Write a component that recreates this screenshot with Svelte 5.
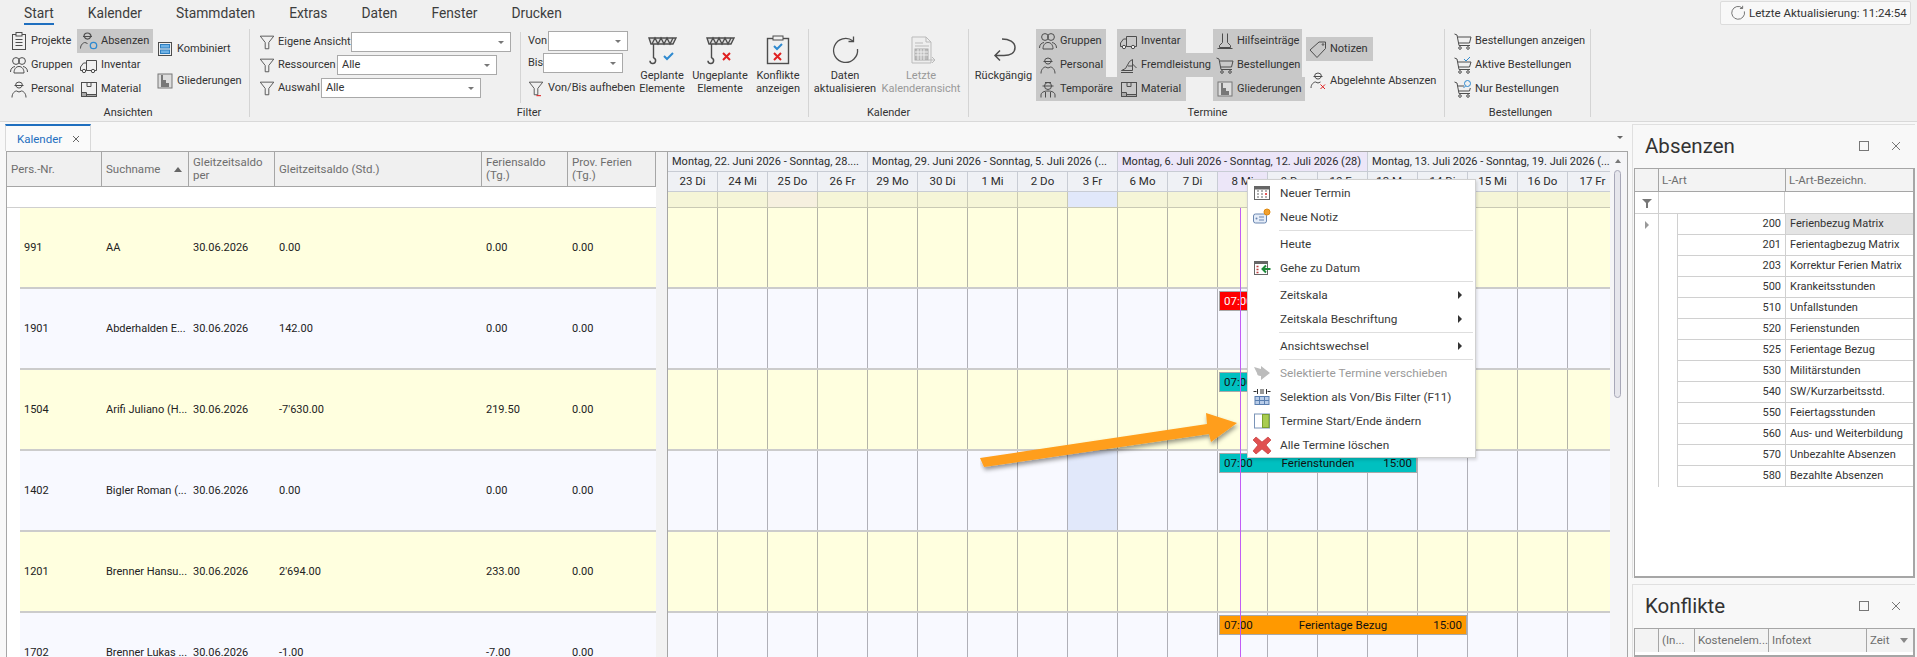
<script lang="ts">
  const ICONS: Record<string, string> = {
    clipboard: `<rect x="3.500" y="3.500" width="13" height="15"/><rect x="7" y="1.500" width="6" height="3.500" fill="#f0f0f0"/><path d="M6.500 8.500h7M6.500 11.500h7M6.500 14.500h7"/>`,
    group: `<circle cx="7" cy="6" r="3.400"/><circle cx="13" cy="6" r="3.400"/><path d="M1.500 17c0-3.500 2-5 4.500-5.500M18.500 17c0-3.500-2-5-4.500-5.500M5 18c0-4 2-6.500 5-6.500s5 2.500 5 6.500z"/>`,
    person: `<path d="M6.500 6.500a3.500 3.500 0 0 1 7 0M5.500 6.500h9M6.800 6.800a3.400 3.400 0 0 0 6.400 0"/><path d="M3 18.500c0-4.500 3-6.500 4.500-6.500l2.500 1 2.500-1c1.500 0 4.500 2 4.500 6.500"/>`,
    absenz: `<path d="M5 5.500a3.500 3.500 0 0 1 7 0M4 5.500h9M5.300 5.800a3.400 3.400 0 0 0 6.400 0" stroke-width="1.200"/><path d="M1.500 17.500c0-4 3-6 4.500-6l2.500 1"/><circle cx="14.500" cy="14.500" r="3.200" stroke="#2f8ad0" stroke-width="1.300"/>`,
    truck: `<path d="M7.500 5.500h10v10h-10zM7.500 8h-3l-3 4v3.500h6"/><circle cx="5" cy="16" r="1.700" fill="#f0f0f0"/><circle cx="14" cy="16" r="1.700" fill="#f0f0f0"/>`,
    material: `<rect x="2.500" y="3.500" width="15" height="14"/><path d="M8 3.500v4h4v-4" /><path d="M2.500 13.500h5v4h-5z" fill="#aaa"/><path d="M7.500 15.500h10v2h-10z" fill="#aaa"/>`,
    kombi: `<rect x="3.500" y="3.500" width="13" height="13"/><rect x="5.500" y="5.500" width="9" height="3.500" fill="#6fb2e6" stroke="#2f7fc0"/><rect x="5.500" y="11" width="9" height="3.500" fill="#6fb2e6" stroke="#2f7fc0"/>`,
    glied: `<rect x="3" y="3" width="14" height="14" fill="#ddd" stroke="#777"/><path d="M6 4h2v5h3v3h3v4h-8z" fill="#777" stroke="none"/>`,
    funnel: `<path d="M2.500 3.500h15l-5.500 7v7h-4v-7z"/>`,
    funnelx: `<path d="M2.500 3.500h15l-5.500 7v7h-4v-7z"/><path d="M10.500 18.500h5" stroke="#e02020" stroke-width="1.200"/>`,
    hilfs: `<path d="M7.500 2.500v9M12.500 2.500v9M7.500 11.500l-3 3v2h11v-2l-3-3M2.500 17.500h15"/>`,
    digger: `<path d="M2.500 15.500l4-2 4-7 3-2v11h-11zM9 11h4M2 17.500h12"/><path d="M13.500 9l4 4"/>`,
    hat: `<circle cx="10" cy="7" r="3.500"/><path d="M4.500 7h11M7 3.500h6"/><path d="M3 18.500v-2.500c0-2.500 3-4 7-4s7 1.500 7 4v2.500M7.500 13v5.500M12.500 13v5.500"/>`,
    cart: `<path d="M1.500 3l2.500 1 2 10.500h11M5 6h13l-1.500 6h-11"/><circle cx="7" cy="17" r="1.300"/><circle cx="15" cy="17" r="1.300"/>`,
    cartcheck: `<path d="M1.500 3l2.500 1 2 10.500h11M5 7h13l-1.500 5h-11"/><circle cx="7" cy="17" r="1.300"/><circle cx="15" cy="17" r="1.300"/><path d="M11 4l2 2 4-4" stroke="#2f8ad0"/>`,
    cartsearch: `<path d="M1.500 3l2.500 1 2 10.500h11M5 7h6M5.500 12h11l.8-3"/><circle cx="7" cy="17" r="1.300"/><circle cx="15" cy="17" r="1.300"/><circle cx="14.500" cy="4.500" r="3" stroke="#2f8ad0"/><path d="M12.500 7l-2 2" stroke="#2f8ad0"/>`,
    tag: `<path d="M2 11l9-8h6.500v6.500l-8.500 9z"/><circle cx="15" cy="5.500" r=".8"/>`,
    personx: `<path d="M6.500 5.500a3.500 3.500 0 0 1 7 0M5.500 5.500h9M6.800 5.800a3.400 3.400 0 0 0 6.400 0"/><path d="M3 17c0-4 3-6 4.500-6l2.500 1 2.500-1"/><path d="M12.500 13.500l4.500 4.500M17 13.500l-4.500 4.500" stroke="#e02020"/>`,
    refresh: `<path d="M15.500 3.800a8 8 0 1 0 2.500 4.200"/><path d="M15.800 1v3.400h-3.400"/>`,
    calendar: `<rect x="2.500" y="3.500" width="15" height="13" stroke="#666" fill="#fff"/><rect x="2.500" y="3.500" width="15" height="2.500" fill="#666" stroke="#666"/><path d="M5 8h2M9 8h2M13 8h2M5 11h2M9 11h2M5 14h2M9 14h2M13 14h2" stroke="#999" stroke-width="1.500"/><path d="M13 11h2" stroke="#e02020" stroke-width="1.500"/>`,
    notiz: `<rect x="1.500" y="7" width="13" height="9" rx="2" fill="#e4ecf8" stroke="#6a86b0"/><circle cx="4.500" cy="11.500" r="1" fill="#6a86b0" stroke="none"/><path d="M7 10h5M7 13h5" stroke="#6a86b0"/><circle cx="15" cy="5" r="3" fill="#f0a030" stroke="#e08a10"/>`,
    goto: `<rect x="2.500" y="3.500" width="13" height="13" stroke="#666" fill="#fff"/><rect x="2.500" y="3.500" width="13" height="2" fill="#666" stroke="#666"/><path d="M4.500 8.500h2M4.500 11.500h2M4.500 14.500h2" stroke="#c04040" stroke-width="1.500"/><path d="M18.500 11h-7M14 7.500l-3.500 3.500 3.500 3.500" stroke="#1f8a3a" stroke-width="2" />`,
    move: `<path d="M2 4l7 2 0-3 9 7-9 7 0-4c-3 0-4-1-4-3z" fill="#bcbcbc" stroke="none"/>`,
    vonbis: `<path d="M5.500 2v5M14.500 2v5M1.500 4.500h3M18.500 4.500h-3M9 2v5M11 2v5" stroke="#333"/><rect x="3" y="9.500" width="14" height="8" fill="#b8cce8" stroke="#5a7fb0"/><path d="M3 13.500h14M7.500 9.500v8M12.500 9.500v8" stroke="#5a7fb0"/>`,
    startend: `<rect x="2.500" y="3" width="15" height="14" fill="#fff" stroke="#7a94b8"/><rect x="10.500" y="3.500" width="6.500" height="13" fill="#a8cc50" stroke="#7aa030"/>`,
    redx: `<path d="M4 2l6 5 6-5 3 3-5 5 5 6-3 3-6-5-6 5-3-3 5-6-5-5z" fill="#e05050" stroke="#c03030" stroke-width=".6"/>`,
  };

  const CRANE = `<path d="M2 3h27l-3 6H4z" fill="#dcdcdc" stroke-width="1.400"/><path d="M5 9l3-6 3 6 3-6 3 6 3-6 3 6 3-6" stroke-width="1.300"/><path d="M6.500 9v14" stroke-width="1.400"/><path d="M6.500 23a2.800 2.800 0 1 1-3.500 2.700" stroke-width="1.500"/>`;

  const BIG: Record<string, string> = {
    craneok: `${CRANE}<path d="M17 21l3 3 6-6" stroke="#2f8ad0" stroke-width="2"/>`,
    craneno: `${CRANE}<path d="M18 18l7 7M25 18l-7 7" stroke="#e02020" stroke-width="2"/>`,
    konflikt: `<rect x="4.500" y="3.500" width="21" height="25" stroke-width="1.400"/><rect x="10" y="1" width="10" height="4" fill="#f0f0f0"/><path d="M11 11l3 3 5-5" stroke="#2f8ad0" stroke-width="2"/><path d="M11 18l7 7M18 18l-7 7" stroke="#e02020" stroke-width="2"/>`,
    refresh: `<path d="M23 6a12 12 0 1 0 4.500 8" stroke-width="1.300"/><path d="M23.500 1.500v5h-5" stroke-width="1.300"/>`,
    letzte: `<path d="M6 2h14l5 5v21H6z" fill="#eee" stroke="#bbb"/><path d="M20 2v5h5" stroke="#bbb"/><path d="M9 8h8M9 11h14" stroke="#bbb"/><rect x="9" y="14" width="13" height="11" fill="#bbb" stroke="#aaa"/><path d="M12 14v11M15 14v11M18 14v11M9 17h13M9 20h13" stroke="#eee"/><path d="M22 25h7M26 22l3 3-3 3" stroke="#bbb"/>`,
    undo: `<path d="M13 4c7 0 13 3 13 8.500s-5 8-11 8H6M11 15.500l-5 5 5 5" stroke-width="1.500"/>`,
  };

  const TABS = ["Start", "Kalender", "Stammdaten", "Extras", "Daten", "Fenster", "Drucken"];

  const PEOPLE = [
    { nr: "991", name: "AA", per: "30.06.2026", std: "0.00", ferien: "0.00", prov: "0.00" },
    { nr: "1901", name: "Abderhalden E...", per: "30.06.2026", std: "142.00", ferien: "0.00", prov: "0.00" },
    { nr: "1504", name: "Arifi Juliano (H...", per: "30.06.2026", std: "-7'630.00", ferien: "219.50", prov: "0.00" },
    { nr: "1402", name: "Bigler Roman (...", per: "30.06.2026", std: "0.00", ferien: "0.00", prov: "0.00" },
    { nr: "1201", name: "Brenner Hansu...", per: "30.06.2026", std: "2'694.00", ferien: "233.00", prov: "0.00" },
    { nr: "1702", name: "Brenner Lukas ...", per: "30.06.2026", std: "-1.00", ferien: "-7.00", prov: "0.00" },
  ];

  const WEEKS = [
    { label: "Montag, 22. Juni 2026 - Sonntag, 28....", days: ["23 Di", "24 Mi", "25 Do", "26 Fr"] },
    { label: "Montag, 29. Juni 2026 - Sonntag, 5. Juli 2026 (...", days: ["29 Mo", "30 Di", "1 Mi", "2 Do", "3 Fr"] },
    { label: "Montag, 6. Juli 2026 - Sonntag, 12. Juli 2026 (28)", days: ["6 Mo", "7 Di", "8 Mi", "9 Do", "10 Fr"], current: true },
    { label: "Montag, 13. Juli 2026 - Sonntag, 19. Juli 2026 (...", days: ["13 Mo", "14 Di", "15 Mi", "16 Do", "17 Fr"] },
  ];
  const DAY_COUNT = 19;
  const HOLIDAY_COL = 8; // 3 Fr
  const CURRENT_COL = 11; // 8 Mi

  // width in px, all of them start at 8 Mi. The first two run on under the context menu.
  const EVENTS: Record<number, { cls: string; width: number; title?: string }> = {
    1: { cls: "red", width: 60 },
    2: { cls: "teal", width: 60 },
    3: { cls: "teal", width: 198, title: "Ferienstunden" },
    5: { cls: "orange", width: 248, title: "Ferientage Bezug" },
  };

  const ABSENZEN = [
    ["200", "Ferienbezug Matrix"],
    ["201", "Ferientagbezug Matrix"],
    ["203", "Korrektur Ferien Matrix"],
    ["500", "Krankeitsstunden"],
    ["510", "Unfallstunden"],
    ["520", "Ferienstunden"],
    ["525", "Ferientage Bezug"],
    ["530", "Militärstunden"],
    ["540", "SW/Kurzarbeitsstd."],
    ["550", "Feiertagsstunden"],
    ["560", "Aus- und Weiterbildung"],
    ["570", "Unbezahlte Absenzen"],
    ["580", "Bezahlte Absenzen"],
  ];
</script>

{#snippet icon(name: string)}
  <svg class="ic" viewBox="0 0 20 20" fill="none" stroke="#4d4d4d" stroke-width="1">{@html ICONS[name]}</svg>
{/snippet}

{#snippet item(name: string, label: string, on = false)}
  <div class="item" class:on>
    {@render icon(name)}
    <span>{label}</span>
  </div>
{/snippet}

{#snippet big(name: string, l1: string, l2 = "", off = false)}
  <div class="big" class:off>
    <svg class="bigic" viewBox="0 0 30 30" fill="none" stroke="#4d4d4d" stroke-width="1">{@html BIG[name]}</svg>
    <span>{l1}</span>
    {#if l2}<span>{l2}</span>{/if}
  </div>
{/snippet}

{#snippet winbtns()}
  <div class="winbtns">
    <span class="maxbox"></span>
    <svg viewBox="0 0 10 10" width="10" height="10" stroke="#777" fill="none"><path d="M1 1l8 8M9 1l-8 8" /></svg>
  </div>
{/snippet}

<div class="app">
  <header class="ribbon">
    <nav class="tabs">
      {#each TABS as t, i}
        <span class="tab" class:active={i === 0}>{t}</span>
      {/each}
      <div class="stamp">
        <svg viewBox="0 0 20 20" width="16" height="16" fill="none" stroke="#555" stroke-width="1">{@html ICONS.refresh}</svg>
        <span>Letzte Aktualisierung: 11:24:54</span>
      </div>
    </nav>

    <div class="groups">
      <section class="group g-ansichten">
        <div class="gbody">
          <div class="col c1">
            {@render item("clipboard", "Projekte")}
            {@render item("group", "Gruppen")}
            {@render item("person", "Personal")}
          </div>
          <div class="col c2">
            {@render item("absenz", "Absenzen", true)}
            {@render item("truck", "Inventar")}
            {@render item("material", "Material")}
          </div>
          <div class="col c3">
            {@render item("kombi", "Kombiniert")}
            {@render item("glied", "Gliederungen")}
          </div>
        </div>
        <div class="glabel">Ansichten</div>
      </section>

      <section class="group g-filter">
        <div class="gbody">
          <div class="filters">
            <div class="frow">
              <svg class="fn" viewBox="0 0 20 20" fill="none" stroke="#4d4d4d">{@html ICONS.funnel}</svg>
              <label class="l-eigene" for="f1">Eigene Ansicht</label>
              <div id="f1" class="combo w160"><span></span><i></i></div>
            </div>
            <div class="frow">
              <svg class="fn" viewBox="0 0 20 20" fill="none" stroke="#4d4d4d">{@html ICONS.funnel}</svg>
              <label class="l-res" for="f2">Ressourcen</label>
              <div id="f2" class="combo w160"><span>Alle</span><i></i></div>
            </div>
            <div class="frow">
              <svg class="fn" viewBox="0 0 20 20" fill="none" stroke="#4d4d4d">{@html ICONS.funnel}</svg>
              <label class="l-aus" for="f3">Auswahl</label>
              <div id="f3" class="combo w160"><span>Alle</span><i></i></div>
            </div>
          </div>
          <div class="vonbis">
            <div class="vrow">
              <label class="l-von" for="v1">Von</label>
              <div id="v1" class="combo w80"><span></span><i></i></div>
            </div>
            <div class="vrow">
              <label class="l-bis" for="v2">Bis</label>
              <div id="v2" class="combo w80"><span></span><i></i></div>
            </div>
            <div class="vclear">
              <svg class="fn" viewBox="0 0 20 20" fill="none" stroke="#4d4d4d">{@html ICONS.funnelx}</svg>
              <span>Von/Bis aufheben</span>
            </div>
          </div>
          {@render big("craneok", "Geplante", "Elemente")}
          {@render big("craneno", "Ungeplante", "Elemente")}
          {@render big("konflikt", "Konflikte", "anzeigen")}
        </div>
        <div class="glabel">Filter</div>
      </section>

      <section class="group g-kalender">
        <div class="gbody">
          {@render big("refresh", "Daten", "aktualisieren")}
          {@render big("letzte", "Letzte", "Kalenderansicht", true)}
        </div>
        <div class="glabel">Kalender</div>
      </section>

      <section class="group g-termine">
        <div class="gbody">
          {@render big("undo", "Rückgängig")}
          <div class="col t1">
            {@render item("group", "Gruppen", true)}
            {@render item("person", "Personal", true)}
            {@render item("hat", "Temporäre", true)}
          </div>
          <div class="col t2">
            {@render item("truck", "Inventar", true)}
            {@render item("digger", "Fremdleistung", true)}
            {@render item("material", "Material", true)}
          </div>
          <div class="col t3">
            {@render item("hilfs", "Hilfseinträge", true)}
            {@render item("cart", "Bestellungen", true)}
            {@render item("glied", "Gliederungen", true)}
          </div>
          <div class="col c3">
            {@render item("tag", "Notizen", true)}
            {@render item("personx", "Abgelehnte Absenzen")}
          </div>
        </div>
        <div class="glabel">Termine</div>
      </section>

      <section class="group g-best">
        <div class="gbody">
          <div class="col">
            {@render item("cart", "Bestellungen anzeigen")}
            {@render item("cartcheck", "Aktive Bestellungen")}
            {@render item("cartsearch", "Nur Bestellungen")}
          </div>
        </div>
        <div class="glabel">Bestellungen</div>
      </section>
    </div>
  </header>

  <main class="main">
    <div class="doc">
      <div class="docbar">
        <div class="doctab">
          <span>Kalender</span>
          <svg viewBox="0 0 8 8" width="8" height="8" stroke="#666" fill="none"><path d="M1 1l6 6M7 1l-6 6" /></svg>
        </div>
        <span class="docmenu"></span>
      </div>
      <div class="sheet">
        <div class="left">
          <div class="lhead">
            <div class="hc">Pers.-Nr.</div>
            <div class="hc sort">Suchname<i></i></div>
            <div class="hc">Gleitzeitsaldo per</div>
            <div class="hc">Gleitzeitsaldo (Std.)</div>
            <div class="hc">Feriensaldo (Tg.)</div>
            <div class="hc">Prov. Ferien (Tg.)</div>
          </div>
          <div class="lfilter"></div>
          {#each PEOPLE as p, i}
            <div class="lrow" class:alt={i % 2 === 1}>
              <div class="lc">{p.nr}</div>
              <div class="lc">{p.name}</div>
              <div class="lc">{p.per}</div>
              <div class="lc">{p.std}</div>
              <div class="lc">{p.ferien}</div>
              <div class="lc">{p.prov}</div>
            </div>
          {/each}
        </div>
        <div class="split"></div>
        <div class="right">
          <div class="weeks">
            {#each WEEKS as w}
              <div class="week" class:current={w.current} style="width: {w.days.length * 50}px">{w.label}</div>
            {/each}
          </div>
          <div class="days">
            {#each WEEKS as w}
              {#each w.days as d, j}
                <div class="day" class:current={w.current && j === 2}>{d}</div>
              {/each}
            {/each}
          </div>
          <div class="tint">
            {#each Array(DAY_COUNT) as _, c}
              <div class="tcell" class:hol={c === HOLIDAY_COL} class:warm={c === 2}></div>
            {/each}
          </div>
          <div class="trows">
            {#each PEOPLE as _, i}
              <div class="trow" class:alt={i % 2 === 1}>
                {#each Array(DAY_COUNT) as _, c}
                  <div class="tcell" class:hol={i === 3 && c === HOLIDAY_COL}></div>
                {/each}
                {#if EVENTS[i]}
                  <div class="event {EVENTS[i].cls}" style="width: {EVENTS[i].width}px">
                    <span>07:00</span>
                    {#if EVENTS[i].title}<span>{EVENTS[i].title}</span><span>15:00</span>{/if}
                  </div>
                {/if}
              </div>
            {/each}
            <div class="nowline" style="left: {(CURRENT_COL + 0.44) * 50}px"></div>
          </div>
        </div>
        <div class="vscroll">
          <i class="up"></i>
          <div class="thumb"></div>
        </div>
      </div>
    </div>

    <aside class="side">
      <section class="panel p-abs">
        <div class="ptitle"><h2>Absenzen</h2>{@render winbtns()}</div>
        <div class="pgrid">
          <div class="phead">
            <div class="pind"></div>
            <div class="ph a">L-Art</div>
            <div class="ph">L-Art-Bezeichn.</div>
          </div>
          <div class="pfilter">
            <div class="pind"><svg viewBox="0 0 10 10" width="10" height="10"><path d="M0 1h10L6 5v5H4V5z" fill="#777" /></svg></div>
            <div class="pf a"></div>
            <div class="pf"></div>
          </div>
          <div class="plist">
            {#each ABSENZEN as r, i}
              <div class="prow">
                <div class="pind">{#if i === 0}<i class="cur"></i>{/if}</div>
                <div class="pindent"></div>
                <div class="pnum">{r[0]}</div>
                <div class="ptxt" class:sel={i === 0}>{r[1]}</div>
              </div>
            {/each}
          </div>
        </div>
      </section>
      <section class="panel p-kon">
        <div class="ptitle"><h2>Konflikte</h2>{@render winbtns()}</div>
        <div class="pgrid">
          <div class="phead khead">
            <div class="pind"></div>
            <div class="ph">(In...</div>
            <div class="ph">Kostenelem...</div>
            <div class="ph">Infotext</div>
            <div class="ph zeit">Zeit<i></i></div>
          </div>
        </div>
      </section>
    </aside>
  </main>

  <div class="menu">
    <div class="mi"><span class="mic">{@render icon("calendar")}</span><span>Neuer Termin</span></div>
    <div class="mi"><span class="mic">{@render icon("notiz")}</span><span>Neue Notiz</span></div>
    <div class="sep"></div>
    <div class="mi"><span class="mic"></span><span>Heute</span></div>
    <div class="mi"><span class="mic">{@render icon("goto")}</span><span>Gehe zu Datum</span></div>
    <div class="sep"></div>
    <div class="mi sub"><span class="mic"></span><span>Zeitskala</span></div>
    <div class="mi sub"><span class="mic"></span><span>Zeitskala Beschriftung</span></div>
    <div class="sep"></div>
    <div class="mi sub"><span class="mic"></span><span>Ansichtswechsel</span></div>
    <div class="sep"></div>
    <div class="mi dis"><span class="mic">{@render icon("move")}</span><span>Selektierte Termine verschieben</span></div>
    <div class="mi"><span class="mic">{@render icon("vonbis")}</span><span>Selektion als Von/Bis Filter (F11)</span></div>
    <div class="mi"><span class="mic">{@render icon("startend")}</span><span>Termine Start/Ende ändern</span></div>
    <div class="mi"><span class="mic">{@render icon("redx")}</span><span>Alle Termine löschen</span></div>
  </div>

  <svg class="arrow" viewBox="0 0 270 70" width="270" height="70">
    <defs>
      <filter id="shadow" x="-5%" y="-10%" width="110%" height="130%">
        <feDropShadow dx="1" dy="3" stdDeviation="2" flood-color="#000" flood-opacity="0.4" />
      </filter>
    </defs>
    <polygon
      points="0,48 227,14 226,3 257,13 231,32 229,24 4,57"
      fill="#ff9e1b"
      filter="url(#shadow)"
    />
  </svg>
</div>

<style>
  :global(body) {
    margin: 0;
    background: #f8f8f8;
  }
  .app {
    position: relative;
    width: 1917px;
    height: 657px;
    overflow: hidden;
    display: flex;
    flex-direction: column;
    font: 11px/16px Roboto, "Liberation Sans", sans-serif;
    color: #333;
    background: #f8f8f8;
  }
  .ic {
    width: 20px;
    height: 20px;
    flex: none;
  }

  /* ribbon */
  .ribbon {
    height: 122px;
    flex: none;
    box-sizing: border-box;
    background: #f0f0f0;
    border-bottom: 1px solid #d9d9d9;
  }
  .tabs {
    display: flex;
    align-items: flex-start;
    gap: 34px;
    height: 29px;
    padding: 0 6px 0 24px;
  }
  .tab {
    height: 21px;
    margin-top: 4px;
    font-size: 13.800px;
    line-height: 19px;
    color: #3d3d3d;
  }
  .tab.active {
    box-shadow: inset 0 -2px 0 #1f6fbf;
  }
  .stamp {
    display: flex;
    align-items: center;
    gap: 3px;
    box-sizing: border-box;
    width: 191px;
    height: 24px;
    margin: 1px 0 0 auto;
    padding-left: 9px;
    font-size: 11.500px;
    white-space: nowrap;
    background: #f8f8f8;
    border: 1px solid #dcdcdc;
    border-radius: 2px;
  }
  .groups {
    display: flex;
    height: 88px;
  }
  .group {
    display: flex;
    flex-direction: column;
    box-sizing: border-box;
    border-right: 1px solid #d4d4d4;
    flex: none;
  }
  .gbody {
    display: flex;
    flex: 1;
  }
  .glabel {
    height: 16px;
    margin-bottom: -4px;
    text-align: center;
  }
  .g-ansichten { width: 250px; padding-left: 7px; }
  .g-filter { width: 559px; }
  .g-kalender { width: 160px; }
  .g-termine { width: 476px; padding-left: 2px; }
  .g-best { width: 146px; padding-left: 6px; }

  .col {
    display: flex;
    flex-direction: column;
    align-items: flex-start;
  }
  .item {
    display: flex;
    align-items: center;
    gap: 2px;
    height: 24px;
    padding: 0 5px 0 2px;
    white-space: nowrap;
  }
  .item.on {
    background: #c8c8c8;
  }
  .c1 { width: 70px; }
  .c2 { width: 76px; }
  .c2 .item.on { width: 76px; box-sizing: border-box; }
  .c3 { gap: 8px; padding-top: 8px; }
  .t1 { width: 81px; }
  .t2 { width: 96px; }
  .t3 { width: 93px; }
  .t1 .item { width: 70px; box-sizing: border-box; }
  .t1 .item:last-child { width: 81px; }
  .t3 .item { width: 89px; box-sizing: border-box; }
  .t3 .item:last-child { width: 92px; }

  .filters {
    display: flex;
    flex-direction: column;
    gap: 3px;
    box-sizing: border-box;
    width: 271px;
    height: 71px;
    margin-top: 3px;
    padding-left: 8px;
    white-space: nowrap;
    border-right: 1px solid #d4d4d4;
  }
  .frow, .vrow, .vclear {
    display: flex;
    align-items: center;
    height: 20px;
  }
  .fn {
    width: 18px;
    height: 18px;
    flex: none;
  }
  .frow label { margin-left: 2px; }
  .l-eigene { width: 73px; }
  .l-res { width: 59px; }
  .l-aus { width: 43px; }
  .combo {
    display: flex;
    align-items: center;
    justify-content: space-between;
    box-sizing: border-box;
    height: 20px;
    padding: 0 6px 0 4px;
    background: #fff;
    border: 1px solid #a9a9a9;
  }
  .combo i {
    width: 0;
    height: 0;
    border: 3px solid transparent;
    border-top: 3px solid #777;
    border-bottom: 0;
  }
  .w160 { width: 160px; }
  .w80 { width: 80px; }
  .vonbis {
    display: flex;
    flex-direction: column;
    gap: 2px;
    width: 112px;
    margin-top: 2px;
    padding-left: 7px;
    flex: none;
    box-sizing: border-box;
    white-space: nowrap;
  }
  .l-von { width: 20px; }
  .l-bis { width: 15px; }
  .vclear { gap: 3px; margin-top: 3px; }
  .vclear .fn { margin-left: -1px; }

  .big {
    display: flex;
    flex-direction: column;
    align-items: center;
    flex: none;
    width: 58px;
    line-height: 13px;
    white-space: nowrap;
  }
  .big.off { color: #999; width: 80px; }
  .bigic {
    width: 30px;
    height: 30px;
    margin: 6px 0 4px;
  }
  .g-kalender .big:first-child { width: 72px; }
  .g-termine .big { width: 65px; }

  /* document area */
  .main {
    display: flex;
    flex: 1;
    min-height: 0;
  }
  .doc {
    display: flex;
    flex-direction: column;
    width: 1632px;
    flex: none;
  }
  .docbar {
    display: flex;
    align-items: flex-end;
    justify-content: space-between;
    height: 29px;
    padding: 0 5px;
    flex: none;
  }
  .doctab {
    display: flex;
    align-items: center;
    justify-content: space-between;
    box-sizing: border-box;
    width: 86px;
    height: 27px;
    padding: 0 10px 0 11px;
    font-size: 11.500px;
    color: #1f6fbf;
    background: #fafafa;
    border-top: 2px solid #1f6fbf;
    border-right: 1px solid #d9d9d9;
    border-left: 1px solid #d9d9d9;
  }
  .docmenu {
    width: 0;
    height: 0;
    margin: 0 4px 12px 0;
    border: 3px solid transparent;
    border-top: 3px solid #666;
    border-bottom: 0;
  }
  .sheet {
    display: flex;
    flex: 1;
    min-height: 0;
    overflow: hidden;
    margin: 0 4px 0 6px;
    background: #fff;
    border-top: 1px solid #a6a6a6;
    border-left: 1px solid #a6a6a6;
    border-right: 1px solid #a6a6a6;
  }
  .left {
    width: 649px;
    flex: none;
  }
  .lhead, .lrow {
    display: grid;
    grid-template-columns: 95px 87px 86px 207px 86px 88px;
  }
  .lhead {
    height: 35px;
    box-sizing: border-box;
    background: #f0f0f0;
    border-bottom: 1px solid #a6a6a6;
  }
  .hc {
    display: flex;
    align-items: center;
    padding: 0 18px 0 4px;
    font-size: 11.500px;
    color: #6e6e6e;
    line-height: 13px;
    border-right: 1px solid #a6a6a6;
  }
  .hc:nth-child(4) { padding-right: 4px; }
  .hc.sort {
    position: relative;
  }
  .hc.sort i {
    position: absolute;
    right: 6px;
    top: 15px;
    border: 4px solid transparent;
    border-bottom: 5px solid #666;
    border-top: 0;
  }
  .lfilter {
    height: 21px;
    box-sizing: border-box;
    border-bottom: 1px solid #cfcfcf;
  }
  .lrow {
    height: 81px;
    box-sizing: border-box;
    margin-left: 13px;
    grid-template-columns: 82px 87px 86px 207px 86px 88px;
    background: #ffffdf;
    border-bottom: 2px solid #cccccc;
  }
  .lrow.alt, .trow.alt {
    background: #f8f9ff;
  }
  .lc {
    display: flex;
    align-items: center;
    padding-left: 4px;
    color: #222;
    white-space: nowrap;
  }
  .split {
    width: 12px;
    flex: none;
    box-sizing: border-box;
    background: #f2f2f2;
    border-right: 1px solid #a6a6a6;
  }
  .right {
    width: 942px;
    flex: none;
    overflow: hidden;
  }
  .weeks, .days, .tint, .trow {
    display: flex;
    width: 950px;
  }
  .week {
    flex: none;
    box-sizing: border-box;
    height: 20px;
    padding-left: 4px;
    line-height: 19px;
    color: #2b2b2b;
    white-space: nowrap;
    overflow: hidden;
    background: #eff1f5;
    border-right: 1px solid #c8ccd4;
    border-bottom: 1px solid #c8ccd4;
  }
  .week.current, .day.current {
    background: #ece6f8;
  }
  .day {
    flex: none;
    box-sizing: border-box;
    width: 50px;
    height: 20px;
    font-size: 11.500px;
    line-height: 19px;
    text-align: center;
    color: #2b2b2b;
    background: #eff1f5;
    border-right: 1px solid #c8ccd4;
    border-bottom: 1px solid #c8ccd4;
  }
  .tint {
    height: 16px;
    background: #f5f5d7;
  }
  .tint .tcell {
    border-bottom: 1px solid #c9c9b4;
    border-right-color: #c9c9b4;
  }
  .tcell {
    flex: none;
    box-sizing: border-box;
    width: 50px;
    border-right: 1px solid #b4b4a8;
  }
  .tcell.hol {
    background: #e1e8fa;
  }
  .tcell.warm {
    background: #f6f0df;
  }
  .trows {
    position: relative;
  }
  .trow {
    position: relative;
    height: 81px;
    box-sizing: border-box;
    background: #ffffdf;
    border-bottom: 2px solid #cccccc;
  }
  .trow.alt .tcell {
    border-right-color: #b0b0b8;
  }
  .event {
    position: absolute;
    top: 2px;
    left: 551px;
    display: flex;
    justify-content: space-between;
    box-sizing: border-box;
    height: 20px;
    padding: 0 4px;
    font-size: 11.500px;
    line-height: 18px;
    color: #111;
    white-space: nowrap;
    border: 1px solid #a9a9a9;
  }
  .event.red { background: #ff0000; color: #fff; }
  .event.teal { background: #00c0c0; }
  .event.orange { background: #ff9900; }
  .nowline {
    position: absolute;
    top: 0;
    bottom: 0;
    width: 1px;
    background: #c25cf5;
  }
  .vscroll {
    position: relative;
    flex: 1;
    background: #f5f5f7;
  }
  .vscroll .up {
    position: absolute;
    top: 7px;
    left: 5px;
    border: 3px solid transparent;
    border-bottom: 4px solid #777;
    border-top: 0;
  }
  .thumb {
    box-sizing: border-box;
    width: 7px;
    height: 228px;
    margin: 18px 0 0 4px;
    background: #e6e6ec;
    border: 1px solid #a8a8b8;
    border-radius: 4px;
  }

  /* right panels */
  .side {
    display: flex;
    flex-direction: column;
    flex: 1;
    gap: 6px;
    padding: 2px 2px 0 0;
    min-width: 0;
  }
  .panel {
    display: flex;
    flex-direction: column;
    box-sizing: border-box;
    background: #f8f8f8;
    border: 1px solid #e0e0e0;
    border-right: 0;
    border-bottom: 0;
  }
  .p-abs { height: 454px; flex: none; }
  .p-kon { flex: 1; min-height: 0; overflow: hidden; }
  .ptitle {
    display: flex;
    align-items: center;
    justify-content: space-between;
    height: 43px;
    flex: none;
    padding: 0 14px 2px 12px;
    box-sizing: border-box;
  }
  .ptitle h2 {
    margin: 0;
    font-size: 20.500px;
    font-weight: 400;
    color: #333;
  }
  .winbtns {
    display: flex;
    align-items: center;
    gap: 22px;
  }
  .maxbox {
    width: 8px;
    height: 8px;
    border: 1px solid #777;
  }
  .pgrid {
    flex: 1;
    min-height: 0;
    margin-left: 1px;
    background: #fff;
    border: 1px solid #a6a6a6;
    border-bottom-width: 2px;
    border-right-width: 2px;
  }
  .phead {
    display: grid;
    grid-template-columns: 23px 127px 1fr;
    height: 23px;
    box-sizing: border-box;
    font-size: 11.500px;
    color: #6e6e6e;
    background: #f3f3f3;
    border-bottom: 1px solid #a6a6a6;
  }
  .khead {
    grid-template-columns: 23px 36px 74px 98px 1fr;
    border-bottom: 0;
  }
  .ph {
    padding-left: 4px;
    line-height: 22px;
    box-shadow: inset 1px 0 0 #a6a6a6;
    white-space: nowrap;
  }
  .ph.zeit {
    position: relative;
  }
  .ph.zeit i {
    position: absolute;
    right: 5px;
    top: 9px;
    border: 4px solid transparent;
    border-top: 5px solid #888;
    border-bottom: 0;
  }
  .pfilter {
    display: grid;
    grid-template-columns: 23px 127px 1fr;
    height: 22px;
    box-sizing: border-box;
    border-bottom: 1px solid #d0d0d0;
  }
  .pf.a {
    border-left: 1px solid #d0d0d0;
    border-right: 1px solid #d0d0d0;
  }
  .pind {
    display: flex;
    align-items: center;
    justify-content: center;
  }
  .cur {
    border: 4px solid transparent;
    border-left: 4px solid #999;
    border-right: 0;
  }
  .prow {
    display: grid;
    grid-template-columns: 23px 19px 108px 1fr;
    height: 21px;
  }
  .pindent {
    border-left: 1px solid #d0d0d0;
  }
  .pnum, .ptxt {
    box-sizing: border-box;
    line-height: 20px;
    color: #333;
    border-bottom: 1px solid #d0d0d0;
    border-left: 1px solid #d0d0d0;
    white-space: nowrap;
  }
  .pnum {
    text-align: right;
    padding-right: 4px;
  }
  .ptxt {
    padding-left: 4px;
  }
  .ptxt.sel {
    background: #e4e4e4;
  }

  /* context menu */
  .menu {
    position: absolute;
    left: 1247px;
    top: 179px;
    box-sizing: border-box;
    width: 229px;
    height: 279px;
    padding: 1px;
    background: #fff;
    border: 1px solid #d0d0d0;
    box-shadow: 1px 2px 3px rgba(0, 0, 0, 0.15);
  }
  .mi {
    position: relative;
    display: flex;
    align-items: center;
    height: 24px;
    font-size: 11.800px;
    color: #3a3a3a;
    white-space: nowrap;
  }
  .mic {
    display: flex;
    align-items: center;
    justify-content: center;
    box-sizing: border-box;
    width: 31px;
    padding-right: 6px;
    flex: none;
  }
  .mi.dis { color: #9a9a9a; }
  .mi.sub::after {
    content: "";
    position: absolute;
    right: 12px;
    top: 8px;
    border: 4px solid transparent;
    border-left: 4px solid #333;
    border-right: 0;
  }
  .sep {
    height: 1px;
    margin: 1px 1px 1px 30px;
    background: #dedede;
  }
  .arrow {
    position: absolute;
    left: 980px;
    top: 410px;
  }
</style>
